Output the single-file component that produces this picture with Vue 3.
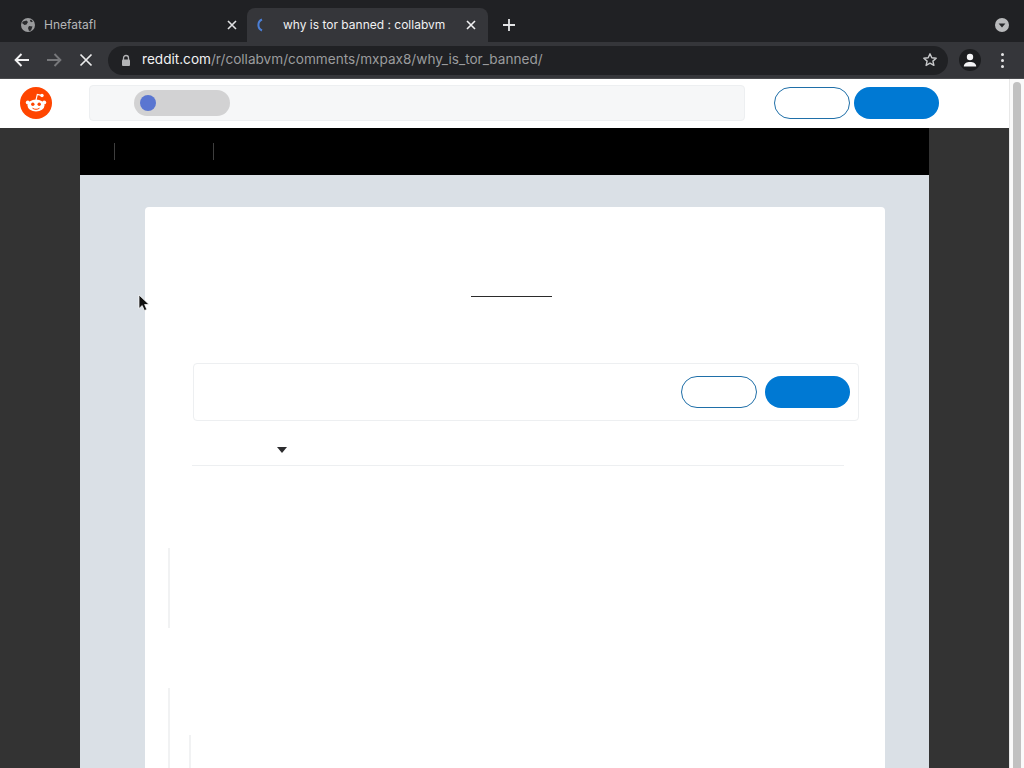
<script setup>
const underlineWidth = 81
</script>

<template>
  <div class="screen">
    <div class="tabstrip">
      <div class="tab">
        <svg class="favicon" width="16" height="16" viewBox="0 0 16 16">
          <circle cx="8" cy="8" r="7" fill="#9a9b9d" />
          <path d="M3 4.5 6.5 3.5 8 5 6.5 7.5 4.5 8 2 6ZM9 9l3.5.5L11 13.5 9 14 8 11ZM11 2.500l2 2-2 .8-1.200-1.800Z" fill="#2a2b2e" />
        </svg>
        <span class="tab-title dim">Hnefatafl</span>
        <svg class="close" width="10" height="10" viewBox="0 0 10 10"><path d="M1 1l8 8M9 1l-8 8" stroke="#e0e1e3" stroke-width="1.6" /></svg>
      </div>
      <div class="tab active">
        <svg class="spinner" width="14" height="16" viewBox="0 0 14 16"><path d="M8 2.500A6 6 0 0 0 8 13.500" fill="none" stroke="#4b7fd6" stroke-width="2" /></svg>
        <span class="tab-title bright">why is tor banned : collabvm</span>
        <svg class="close" width="10" height="10" viewBox="0 0 10 10"><path d="M1 1l8 8M9 1l-8 8" stroke="#f1f1f2" stroke-width="1.6" /></svg>
      </div>
      <svg class="plus" width="12" height="12" viewBox="0 0 12 12"><path d="M6 0v12M0 6h12" stroke="#e3e4e6" stroke-width="1.8" /></svg>
      <div class="tab-search">
        <svg width="14" height="14" viewBox="0 0 14 14">
          <circle cx="7" cy="7" r="7" fill="#b9babc" />
          <path d="M3.600 5.400h6.800L7 9.600Z" fill="#26272a" />
        </svg>
      </div>
    </div>

    <div class="toolbar">
      <button class="nav first">
        <svg width="16" height="14" viewBox="0 0 16 14"><path d="M15 7H2M7.500 1 1.600 7l5.900 6" fill="none" stroke="#f2f2f3" stroke-width="1.9" /></svg>
      </button>
      <button class="nav">
        <svg width="16" height="14" viewBox="0 0 16 14"><path d="M1 7h13M8.500 1l5.900 6-5.900 6" fill="none" stroke="#77787b" stroke-width="1.9" /></svg>
      </button>
      <button class="nav">
        <svg width="14" height="14" viewBox="0 0 14 14"><path d="M1.500 1.500l11 11M12.500 1.500l-11 11" stroke="#ececed" stroke-width="1.700" /></svg>
      </button>
      <div class="omnibox">
        <svg class="lock" width="10" height="13" viewBox="0 0 10 13">
          <path d="M2.500 6V4a2.500 2.500 0 0 1 5 0v2" fill="none" stroke="#b3b4b6" stroke-width="1.300" />
          <rect x="1" y="5.500" width="8" height="6.500" rx="1" fill="#b3b4b6" />
        </svg>
        <span class="url"><span class="host">reddit.com</span>/r/collabvm/comments/mxpax8/why_is_tor_banned/</span>
        <svg class="star" width="16" height="16" viewBox="0 0 16 16">
          <path d="M8 1.800l1.800 4 4.400.4-3.300 2.900 1 4.300L8 11.200l-3.900 2.200 1-4.300-3.300-2.900 4.400-.4Z" fill="none" stroke="#c8c9cb" stroke-width="1.400" stroke-linejoin="round" />
        </svg>
      </div>
      <div class="avatar">
        <svg width="14" height="14" viewBox="0 0 14 14">
          <circle cx="7" cy="4" r="3.200" fill="#f4f4f5" />
          <path d="M.8 13.500c0-3.300 3-4.500 6.200-4.500s6.200 1.200 6.200 4.500Z" fill="#f4f4f5" />
        </svg>
      </div>
      <div class="menu"><i></i><i></i><i></i></div>
    </div>

    <div class="viewport">
      <div class="page">
        <header class="site-header">
          <svg class="logo" width="32" height="32" viewBox="0 0 32 32">
            <circle cx="16" cy="16" r="16" fill="#ff4500" />
            <ellipse cx="16" cy="18.500" rx="8.500" ry="6" fill="#fff" />
            <circle cx="7.800" cy="15.500" r="2" fill="#fff" />
            <circle cx="24.200" cy="15.500" r="2" fill="#fff" />
            <path d="M16 13l1.300-5.500 4 .9" fill="none" stroke="#fff" stroke-width="1.100" />
            <circle cx="22" cy="8.500" r="1.700" fill="#fff" />
            <circle cx="12.800" cy="17.300" r="1.700" fill="#ff4500" />
            <circle cx="19.200" cy="17.300" r="1.700" fill="#ff4500" />
            <path d="M12.500 21.200c2 1.500 5 1.500 7 0" fill="none" stroke="#ff4500" stroke-width="1" />
          </svg>
          <div class="search">
            <div class="community-pill"><span class="community-dot"></span></div>
          </div>
          <div class="auth">
            <span class="btn outline"></span>
            <span class="btn solid wide"></span>
          </div>
        </header>

        <div class="banner-column">
          <div class="banner">
            <span class="tick first-tick"></span>
            <span class="tick second-tick"></span>
          </div>
          <div class="post-area">
            <div class="card">
              <div class="title-rule" :style="{ width: underlineWidth + 'px' }"></div>
              <div class="login-box">
                <span class="btn outline"></span>
                <span class="btn solid wide"></span>
              </div>
              <div class="sort">
                <svg class="caret" width="10" height="6" viewBox="0 0 10 6"><path d="M0 0h10L5 6Z" fill="#2c2c2e" /></svg>
              </div>
              <div class="comments">
                <div class="thread"></div>
                <div class="thread second">
                  <div class="nested"></div>
                </div>
              </div>
            </div>
          </div>
        </div>
      </div>
      <div class="scrollbar"><div class="thumb"></div></div>
    </div>

    <svg class="cursor" width="12" height="18" viewBox="0 0 12 18">
      <path d="M1 1v13.500l3.200-3 2.200 5 2.400-1-2.200-5H11Z" fill="#111" stroke="#fff" stroke-width=".7" />
    </svg>
  </div>
</template>

<style>
html, body { margin: 0; overflow: hidden; background: #333; }
</style>

<style scoped>
.screen {
  position: relative;
  width: 1024px;
  height: 768px;
  overflow: hidden;
  display: flex;
  flex-direction: column;
  font-family: Inter, "Liberation Sans", sans-serif;
  background: #333;
}
.tabstrip {
  height: 42px;
  flex: none;
  display: flex;
  align-items: flex-end;
  background: #202124;
  box-sizing: border-box;
  padding-left: 8px;
}
.tab {
  width: 239px;
  height: 34px;
  flex: none;
  display: flex;
  align-items: center;
  box-sizing: border-box;
  padding: 0 10px 0 5px;
  font-size: 12px;
}
.tab .favicon { margin-left: 7px; margin-right: 8px; flex: none; }
.tab.active {
  width: 241px;
  background: #35363a;
  border-radius: 8px 8px 0 0;
  padding: 0 12px 0 7px;
}
.spinner { margin-right: 15px; flex: none; }
.tab-title { flex: 1; white-space: nowrap; margin-bottom: 2px; }
.dim { color: #b5b6b8; }
.bright { color: #f1f1f2; }
.close { flex: none; }
.plus { flex: none; margin: 0 0 11px 15px; }
.tab-search { margin-left: auto; margin-right: 15px; height: 34px; display: flex; align-items: center; }
.toolbar {
  height: 37px;
  flex: none;
  display: flex;
  align-items: center;
  background: #35363a;
  box-sizing: border-box;
  border-bottom: 1px solid #4a4b4e;
}
.nav {
  width: 32px;
  height: 28px;
  padding: 0;
  border: 0;
  background: none;
  display: flex;
  align-items: center;
  justify-content: center;
  flex: none;
}
.nav.first { margin-left: 6px; }
.omnibox {
  width: 840px;
  height: 29px;
  margin-left: 6px;
  flex: none;
  display: flex;
  align-items: center;
  box-sizing: border-box;
  padding: 0 10px 0 13px;
  background: #202124;
  border-radius: 15px;
}
.lock { flex: none; }
.url {
  margin: 0 0 2px 11px;
  font-size: 13.6px;
  color: #9b9c9e;
  white-space: nowrap;
  flex: 1;
}
.host { color: #f1f1f2; }
.star { flex: none; }
.avatar {
  width: 22px;
  height: 22px;
  margin-left: 11px;
  border-radius: 50%;
  background: #1c1d1f;
  display: flex;
  align-items: center;
  justify-content: center;
  flex: none;
}
.menu {
  margin-left: 20px;
  display: flex;
  flex-direction: column;
  gap: 3px;
}
.menu i { width: 3px; height: 3px; border-radius: 50%; background: #e6e6e7; display: block; }
.viewport { flex: 1; display: flex; min-height: 0; }
.page { width: 1009px; flex: none; display: flex; flex-direction: column; background: #333; overflow: hidden; }
.site-header {
  height: 49px;
  flex: none;
  display: flex;
  align-items: center;
  background: #fff;
  box-sizing: border-box;
  padding: 0 0 2px 20px;
}
.logo { flex: none; }
.search {
  width: 656px;
  height: 36px;
  margin-left: 37px;
  flex: none;
  display: flex;
  align-items: center;
  box-sizing: border-box;
  padding-left: 44px;
  background: #f6f7f8;
  border: 1px solid #edeff1;
  border-radius: 4px;
}
.community-pill {
  width: 96px;
  height: 26px;
  display: flex;
  align-items: center;
  box-sizing: border-box;
  padding-left: 6px;
  border-radius: 13px;
  background: #d2d2d3;
}
.community-dot { width: 16px; height: 16px; border-radius: 50%; background: #5a76d1; }
.auth { margin-left: 29px; display: flex; gap: 4px; }
.btn { display: block; height: 32px; width: 76px; box-sizing: border-box; border-radius: 16px; flex: none; }
.btn.outline { background: #fff; border: 1px solid #1f6fa8; }
.btn.solid { background: #0079d3; }
.btn.wide { width: 85px; }
.banner-column { width: 849px; margin-left: 80px; flex: 1; display: flex; flex-direction: column; min-height: 0; }
.banner { height: 47px; flex: none; background: #000; display: flex; align-items: center; }
.tick { width: 1px; height: 17px; background: #3e3e3e; flex: none; }
.first-tick { margin-left: 34px; }
.second-tick { margin-left: 98px; }
.post-area { flex: 1; background: #dae0e6; padding: 32px 44px 0 65px; min-height: 0; }
.card {
  height: 600px;
  background: #fff;
  border-radius: 4px 4px 0 0;
  box-sizing: border-box;
  padding: 89px 26px 0 47px;
}
.title-rule { height: 1px; background: #2b2b2b; margin-left: 279px; }
.login-box {
  margin: 66px 0 0 1px;
  height: 58px;
  box-sizing: border-box;
  display: flex;
  justify-content: flex-end;
  align-items: center;
  gap: 8px;
  padding-right: 8px;
  background: #fff;
  border: 1px solid #edeff1;
  border-radius: 4px;
}
.sort {
  height: 45px;
  width: 652px;
  box-sizing: border-box;
  border-bottom: 1px solid #edeff1;
  padding: 26px 0 0 85px;
}
.caret { display: block; }
.comments { margin-left: -24px; padding-top: 82px; }
.thread { width: 2px; height: 80px; background: #f1f2f3; }
.thread.second { margin-top: 60px; position: relative; }
.nested { position: absolute; left: 21px; top: 47px; width: 2px; height: 40px; background: #f1f2f3; }
.scrollbar { flex: 1; background: #fafafa; border-left: 1px solid #e8e8e8; padding: 3px 3px 0 3px; box-sizing: border-box; }
.thumb { height: 100%; background: #c1c1c1; border-radius: 5px 5px 0 0; }
.cursor { position: absolute; left: 138px; top: 294px; }
</style>
